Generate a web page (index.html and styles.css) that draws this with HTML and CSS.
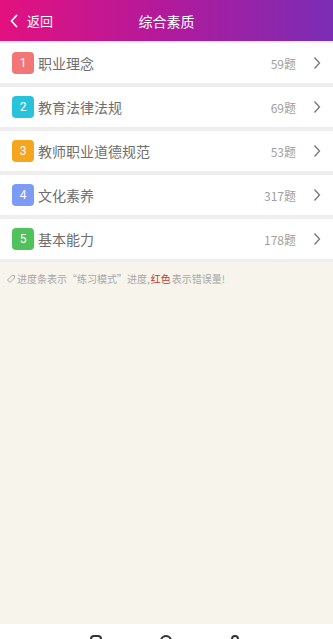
FILE: index.html
```html
<!DOCTYPE html>
<html lang="zh">
<head>
<meta charset="utf-8">
<link rel="stylesheet" href="styles.css">
</head>
<body>
<div class="page">
  <header class="topbar">
    <div class="back">
      <svg class="back-ico" width="10" height="14" viewBox="0 0 10 14"><path d="M7.5 1.5 L2.5 7 L7.5 12.5" fill="none" stroke="#fff" stroke-width="1.8" stroke-linecap="round" stroke-linejoin="round"/></svg>
      <span>返回</span>
    </div>
    <div class="title">综合素质</div>
  </header>
  <div class="list">
    <div class="row"><span class="badge b1">1</span><span class="name">职业理念</span><span class="count">59题</span><svg class="chev" width="8" height="14" viewBox="0 0 8 14"><path d="M1.5 1.5 L6.5 7 L1.5 12.5" fill="none" stroke="#777" stroke-width="1.3"/></svg></div>
    <div class="row"><span class="badge b2">2</span><span class="name">教育法律法规</span><span class="count">69题</span><svg class="chev" width="8" height="14" viewBox="0 0 8 14"><path d="M1.5 1.5 L6.5 7 L1.5 12.5" fill="none" stroke="#777" stroke-width="1.3"/></svg></div>
    <div class="row"><span class="badge b3">3</span><span class="name">教师职业道德规范</span><span class="count">53题</span><svg class="chev" width="8" height="14" viewBox="0 0 8 14"><path d="M1.5 1.5 L6.5 7 L1.5 12.5" fill="none" stroke="#777" stroke-width="1.3"/></svg></div>
    <div class="row"><span class="badge b4">4</span><span class="name">文化素养</span><span class="count">317题</span><svg class="chev" width="8" height="14" viewBox="0 0 8 14"><path d="M1.5 1.5 L6.5 7 L1.5 12.5" fill="none" stroke="#777" stroke-width="1.3"/></svg></div>
    <div class="row"><span class="badge b5">5</span><span class="name">基本能力</span><span class="count">178题</span><svg class="chev" width="8" height="14" viewBox="0 0 8 14"><path d="M1.5 1.5 L6.5 7 L1.5 12.5" fill="none" stroke="#777" stroke-width="1.3"/></svg></div>
  </div>
  <p class="note"><svg class="tag" width="10" height="10" viewBox="0 0 10 10"><path d="M1.5 6 L6 1.5 L8.5 1.5 L8.5 4 L4 8.5 Z" fill="none" stroke="#aaa" stroke-width="1"/></svg>进度条表示“练习模式”进度,<span class="red">红色</span>表示错误量!</p>
  <div class="spacer"></div>
  <nav class="tabbar">
    <span class="tab t1"></span>
    <span class="tab t2"></span>
    <span class="tab t3"></span>
  </nav>
</div>
</body>
</html>
```

FILE: styles.css
```css
* { box-sizing: border-box; }
html, body { margin: 0; padding: 0; }
body {
  font-family: "Noto Sans CJK SC", "Noto Sans", sans-serif;
  background: #f7f4ec;
}
.page {
  width: 333px;
  height: 639px;
  display: flex;
  flex-direction: column;
  overflow: hidden;
}
.topbar {
  height: 41px;
  flex: none;
  background: linear-gradient(90deg, #e3117f 0%, #b11a9b 50%, #7a2db5 100%);
  display: flex;
  align-items: center;
  position: relative;
  color: #fff;
}
.back {
  display: flex;
  align-items: center;
  padding-left: 9px;
  font-size: 13px;
  gap: 8px;
  z-index: 1;
}
.title {
  position: absolute;
  left: 0;
  right: 0;
  text-align: center;
  font-size: 14px;
}
.list {
  background: #eeeeee;
  padding-top: 2px;
  padding-bottom: 3px;
  display: flex;
  flex-direction: column;
  gap: 4px;
}
.row {
  height: 40px;
  background: #fff;
  display: flex;
  align-items: center;
  padding-left: 12px;
  padding-right: 12px;
}
.badge {
  width: 22px;
  height: 22px;
  border-radius: 4px;
  color: #fff;
  font-size: 12px;
  display: flex;
  align-items: center;
  justify-content: center;
  font-family: "Roboto", sans-serif;
  margin-right: 4px;
}
.b1 { background: #f27676; }
.b2 { background: #27c3da; }
.b3 { background: #f6a51e; }
.b4 { background: #7d9bf5; }
.b5 { background: #4fc25c; }
.name {
  flex: 1;
  font-size: 14px;
  color: #6e6e6e;
}
.count {
  font-size: 12px;
  color: #a0a0a0;
  margin-right: 17px;
}
.chev { flex: none; }
.note {
  margin: 0;
  padding: 9px 0 0 6px;
  font-size: 10px;
  color: #a8a8a8;
  display: flex;
  align-items: center;
  gap: 1px;
}
.red { color: #c33a2f; }
.spacer { flex: 1; }
.tabbar {
  height: 15px;
  flex: none;
  background: #fff;
  position: relative;
}
.tab {
  position: absolute;
  top: 11px;
  width: 12px;
  height: 12px;
  border: 2px solid #333;
  border-radius: 4px;
}
.t1 { left: 90px; }
.t2 { left: 160px; border-radius: 6px; }
.t3 { left: 231px; width: 8px; border-radius: 4px 4px 0 0; }
```
